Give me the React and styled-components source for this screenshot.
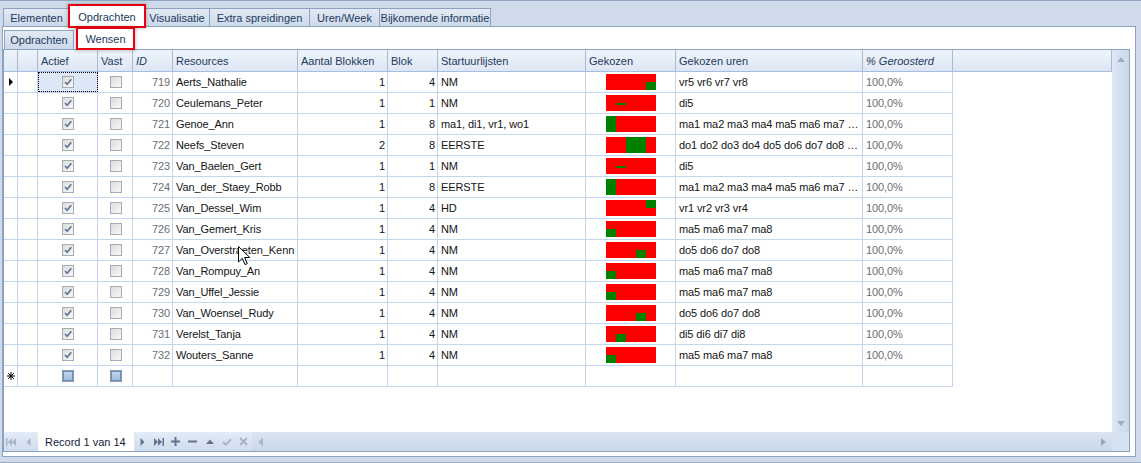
import React from "react";
import styled, { createGlobalStyle, css } from "styled-components";

const GlobalStyle = createGlobalStyle`
  html, body { margin: 0; padding: 0; }
  body {
    background: #cfdbeb;
    font-family: "Liberation Sans", Arial, sans-serif;
    font-size: 11px;
  }
  * { box-sizing: border-box; }
`;

const Window = styled.div`
  position: relative;
  width: 1141px;
  height: 463px;
  background: #cfdbeb;
  border-top: 1px solid #8ea4c1;
  border-bottom: 1px solid #9aafca;
  padding: 5px 5px 5px 2px;
  display: flex;
  flex-direction: column;
`;

const TabStrip = styled.div`
  display: flex;
  align-items: flex-end;
  height: 20px;
  padding-left: 2px;
  position: relative;
  z-index: 2;
`;

const Tab = styled.div`
  width: ${(p) => p.$w}px;
  flex: none;
  height: ${(p) => (p.$active ? 22 : 18)}px;
  margin-left: -1px;
  margin-bottom: ${(p) => (p.$active ? -1 : 0)}px;
  border: 1px solid #8ca2c0;
  border-bottom: none;
  background: ${(p) => (p.$active ? "#fff" : "linear-gradient(#e2eaf5, #ccd9eb)")};
  color: #1e395b;
  display: flex;
  align-items: center;
  justify-content: center;
  white-space: nowrap;
  position: relative;
  z-index: ${(p) => (p.$active ? 2 : 1)};
  ${(p) =>
    p.$marked &&
    css`
      outline: 2px solid #e60012;
      outline-offset: -1px;
      box-shadow: 0 0 3px 2px rgba(60, 60, 60, 0.25);
    `}
`;

const Panel = styled.div`
  flex: 1;
  background: #fff;
  border: 1px solid #8ca2c0;
  display: flex;
  flex-direction: column;
  padding: 0 5px 4px 0;
`;

const SubTabStrip = styled.div`
  display: flex;
  align-items: flex-end;
  height: 22px;
  padding-left: 1px;
  position: relative;
  z-index: 2;
`;

const SubTab = styled.div`
  width: ${(p) => p.$w}px;
  flex: none;
  height: ${(p) => (p.$active ? 21 : 19)}px;
  margin-left: ${(p) => p.$gap || 0}px;
  border: 1px solid #8ca2c0;
  border-bottom: none;
  background: ${(p) => (p.$active ? "#fff" : "linear-gradient(#e2eaf5, #ccd9eb)")};
  color: #1e395b;
  display: flex;
  align-items: center;
  justify-content: center;
  ${(p) =>
    p.$marked &&
    css`
      border-color: transparent;
      outline: 2px solid #e60012;
      outline-offset: -1px;
      box-shadow: 0 0 3px 2px rgba(60, 60, 60, 0.25);
    `}
`;

const Grid = styled.div`
  flex: 1;
  border: 1px solid #8ca2c0;
  display: flex;
  flex-direction: column;
  min-height: 0;
`;

const GridBody = styled.div`
  flex: 1;
  display: flex;
  min-height: 0;
`;

const TableArea = styled.div`
  flex: 1;
  display: flex;
  flex-direction: column;
  overflow: hidden;
  background: #fff;
`;

const HeaderRow = styled.div`
  display: flex;
  height: 22px;
  flex: none;
  border-bottom: 1px solid #a5bedf;
  background: linear-gradient(#eef4fb, #dde7f4);
`;

const HeaderCell = styled.div`
  width: ${(p) => p.$w}px;
  flex: ${(p) => (p.$fill ? 1 : "none")};
  border-right: 1px solid #a6bbd6;
  padding-left: 3px;
  display: flex;
  align-items: center;
  color: #1e395b;
  font-style: ${(p) => (p.$italic ? "italic" : "normal")};
  white-space: nowrap;
  overflow: hidden;
`;

const Row = styled.div`
  display: flex;
  flex: none;
  width: 949px;
  height: 21px;
  border-bottom: 1px solid #c3d6ef;
`;

const Cell = styled.div`
  width: ${(p) => p.$w}px;
  flex: none;
  border-right: 1px solid #c3d6ef;
  display: flex;
  align-items: center;
  justify-content: ${(p) =>
    p.$align === "right" ? "flex-end" : p.$align === "center" ? "center" : "flex-start"};
  padding: 0 2px 0 3px;
  color: ${(p) => (p.$muted ? "#6e6e6e" : "#141414")};
  letter-spacing: -0.1px;
  white-space: nowrap;
  overflow: hidden;
  ${(p) =>
    p.$focus &&
    css`
      background: #dce8f8;
      outline: 1px dotted #000;
      outline-offset: -1px;
    `}
`;

const RowPointer = styled.span`
  width: 0;
  height: 0;
  border-left: 4px solid #000;
  border-top: 4px solid transparent;
  border-bottom: 4px solid transparent;
`;

const CheckBox = styled.span`
  width: 12px;
  height: 12px;
  border: 1px solid #a8abb2;
  background: linear-gradient(135deg, #dcdcdc, #f8f8f8);
  display: flex;
  align-items: center;
  justify-content: center;
  ${(p) =>
    p.$new &&
    css`
      border-color: #8f9bae;
      background: #fff;
      &::after {
        content: "";
        width: 8px;
        height: 8px;
        background: linear-gradient(#c2d5ec, #9ebce0);
        border: 1px solid #6f8fbb;
      }
    `}
`;

const Footer = styled.div`
  display: flex;
  height: 19px;
  flex: none;
`;

const Navigator = styled.div`
  display: flex;
  width: 248px;
  flex: none;
  background: linear-gradient(#e3ebf6, #cfdcee);
`;

const NavButton = styled.div`
  width: ${(p) => p.$w}px;
  flex: none;
  display: flex;
  align-items: center;
  justify-content: center;
`;

const RecordBox = styled.div`
  width: 96px;
  flex: none;
  background: #fff;
  color: #15233a;
  font-size: 11px;
  display: flex;
  align-items: center;
  padding-left: 7px;
  white-space: nowrap;
`;

const HScroll = styled.div`
  flex: 1;
  display: flex;
  align-items: center;
  justify-content: space-between;
  padding: 0 6px;
  background: linear-gradient(#dae4f2, #c9d8eb);
`;

const VScroll = styled.div`
  width: 17px;
  flex: none;
  display: flex;
  flex-direction: column;
  align-items: center;
  justify-content: space-between;
  padding: 7px 0 6px 1px;
  background: linear-gradient(90deg, #dfe8f4, #c9d8eb);
`;

const Corner = styled.div`
  width: 17px;
  flex: none;
  background: #d6e1f0;
`;

const Arrow = styled.span`
  width: 0;
  height: 0;
  ${(p) =>
    p.$dir === "up" &&
    css`
      border-bottom: 5px solid #9eadc3;
      border-left: 4.5px solid transparent;
      border-right: 4.5px solid transparent;
    `}
  ${(p) =>
    p.$dir === "down" &&
    css`
      border-top: 5px solid #9eadc3;
      border-left: 4.5px solid transparent;
      border-right: 4.5px solid transparent;
    `}
  ${(p) =>
    p.$dir === "left" &&
    css`
      border-right: 5px solid #a9b6c9;
      border-top: 4px solid transparent;
      border-bottom: 4px solid transparent;
    `}
  ${(p) =>
    p.$dir === "right" &&
    css`
      border-left: 5px solid #97a6bd;
      border-top: 4px solid transparent;
      border-bottom: 4px solid transparent;
    `}
`;

const Cursor = styled.svg`
  position: absolute;
  left: 238px;
  top: 245px;
  pointer-events: none;
  z-index: 5;
`;

const columns = [
  { key: "ind", w: 14, label: "" },
  { key: "blank", w: 20, label: "" },
  { key: "actief", w: 60, label: "Actief" },
  { key: "vast", w: 35, label: "Vast" },
  { key: "id", w: 40, label: "ID", italic: true },
  { key: "res", w: 125, label: "Resources" },
  { key: "aantal", w: 90, label: "Aantal Blokken" },
  { key: "blok", w: 50, label: "Blok" },
  { key: "start", w: 148, label: "Startuurlijsten" },
  { key: "gek", w: 90, label: "Gekozen" },
  { key: "uren", w: 187, label: "Gekozen uren" },
  { key: "pct", w: 90, label: "% Geroosterd", italic: true },
];

const W = Object.fromEntries(columns.map((c) => [c.key, c.w]));

// id, naam, aantal, blok, startlijst, groen vak [x, y, w, h], gekozen uren
const rows = [
  [719, "Aerts_Nathalie", 1, 4, "NM", [40, 8, 10, 8], "vr5 vr6 vr7 vr8"],
  [720, "Ceulemans_Peter", 1, 1, "NM", [10, 8, 10, 2], "di5"],
  [721, "Genoe_Ann", 1, 8, "ma1, di1, vr1, wo1", [0, 0, 10, 16], "ma1 ma2 ma3 ma4 ma5 ma6 ma7 …"],
  [722, "Neefs_Steven", 2, 8, "EERSTE", [20, 0, 20, 16], "do1 do2 do3 do4 do5 do6 do7 do8 …"],
  [723, "Van_Baelen_Gert", 1, 1, "NM", [10, 8, 10, 2], "di5"],
  [724, "Van_der_Staey_Robb", 1, 8, "EERSTE", [0, 0, 10, 16], "ma1 ma2 ma3 ma4 ma5 ma6 ma7 …"],
  [725, "Van_Dessel_Wim", 1, 4, "HD", [40, 0, 10, 8], "vr1 vr2 vr3 vr4"],
  [726, "Van_Gemert_Kris", 1, 4, "NM", [0, 8, 10, 8], "ma5 ma6 ma7 ma8"],
  [727, "Van_Overstraeten_Kenn", 1, 4, "NM", [30, 8, 10, 8], "do5 do6 do7 do8"],
  [728, "Van_Rompuy_An", 1, 4, "NM", [0, 8, 10, 8], "ma5 ma6 ma7 ma8"],
  [729, "Van_Uffel_Jessie", 1, 4, "NM", [0, 8, 10, 8], "ma5 ma6 ma7 ma8"],
  [730, "Van_Woensel_Rudy", 1, 4, "NM", [30, 8, 10, 8], "do5 do6 do7 do8"],
  [731, "Verelst_Tanja", 1, 4, "NM", [10, 8, 10, 8], "di5 di6 di7 di8"],
  [732, "Wouters_Sanne", 1, 4, "NM", [0, 8, 10, 8], "ma5 ma6 ma7 ma8"],
];

const Check = ({ on, isNew }) => (
  <CheckBox $new={isNew}>
    {on && (
      <svg width="10" height="10" viewBox="0 0 10 10">
        <path d="M2 5 L4.2 7.3 L8.3 2.2" fill="none" stroke="#5f7596" strokeWidth="1.7" />
      </svg>
    )}
  </CheckBox>
);

const Bar = ({ green }) => {
  const [x, y, w, h] = green;
  return (
    <svg width="50" height="16">
      <rect width="50" height="16" fill="#ff0000" />
      <rect x={x} y={y} width={w} height={h} fill="#008000" />
    </svg>
  );
};

const NewRowMark = () => (
  <svg width="8" height="8" viewBox="0 0 8 8">
    <g stroke="#000" strokeWidth="1">
      <line x1="4" y1="0" x2="4" y2="8" />
      <line x1="0" y1="4" x2="8" y2="4" />
      <line x1="1.2" y1="1.2" x2="6.8" y2="6.8" />
      <line x1="6.8" y1="1.2" x2="1.2" y2="6.8" />
    </g>
  </svg>
);

const dark = "#62748f";
const light = "#a9b5c8";

const NavIcon = ({ kind }) => {
  switch (kind) {
    case "first":
      return (
        <svg width="10" height="8" viewBox="0 0 10 8" fill={light}>
          <rect x="0" y="0" width="1.5" height="8" />
          <path d="M6 0 L2 4 L6 8Z M10 0 L6 4 L10 8Z" />
        </svg>
      );
    case "prev":
      return (
        <svg width="5" height="8" viewBox="0 0 5 8" fill={light}>
          <path d="M4.5 0 L0.5 4 L4.5 8Z" />
        </svg>
      );
    case "next":
      return (
        <svg width="5" height="8" viewBox="0 0 5 8" fill={dark}>
          <path d="M0.5 0 L4.5 4 L0.5 8Z" />
        </svg>
      );
    case "last":
      return (
        <svg width="10" height="8" viewBox="0 0 10 8" fill={dark}>
          <path d="M0 0 L4 4 L0 8Z M4 0 L8 4 L4 8Z" />
          <rect x="8.5" y="0" width="1.5" height="8" />
        </svg>
      );
    case "plus":
      return (
        <svg width="9" height="9" viewBox="0 0 9 9" fill={dark}>
          <rect x="3.5" y="0" width="2" height="9" />
          <rect x="0" y="3.5" width="9" height="2" />
        </svg>
      );
    case "minus":
      return (
        <svg width="9" height="9" viewBox="0 0 9 9" fill={dark}>
          <rect x="0" y="3.5" width="9" height="2" />
        </svg>
      );
    case "up":
      return (
        <svg width="8" height="5" viewBox="0 0 8 5" fill={dark}>
          <path d="M0 5 L4 0.5 L8 5Z" />
        </svg>
      );
    case "ok":
      return (
        <svg width="10" height="8" viewBox="0 0 10 8">
          <path d="M1 4 L3.8 6.6 L9 1.2" fill="none" stroke={light} strokeWidth="2" />
        </svg>
      );
    default:
      return (
        <svg width="9" height="9" viewBox="0 0 9 9">
          <path d="M1 1 L8 8 M8 1 L1 8" stroke={light} strokeWidth="2" />
        </svg>
      );
  }
};

const App = () => (
  <>
    <GlobalStyle />
    <Window>
      <TabStrip>
        <Tab $w={67}>Elementen</Tab>
        <Tab $w={76} $active $marked>
          Opdrachten
        </Tab>
        <Tab $w={66}>Visualisatie</Tab>
        <Tab $w={101}>Extra spreidingen</Tab>
        <Tab $w={71}>Uren/Week</Tab>
        <Tab $w={112}>Bijkomende informatie</Tab>
      </TabStrip>

      <Panel>
        <SubTabStrip>
          <SubTab $w={70}>Opdrachten</SubTab>
          <SubTab $w={57} $gap={3} $active $marked>
            Wensen
          </SubTab>
        </SubTabStrip>

        <Grid>
          <GridBody>
            <TableArea>
              <HeaderRow>
                {columns.map((c) => (
                  <HeaderCell key={c.key} $w={c.w} $italic={c.italic}>
                    {c.label}
                  </HeaderCell>
                ))}
                <HeaderCell $fill />
              </HeaderRow>

              {rows.map(([id, name, aantal, blok, start, green, uren], i) => (
                <Row key={id}>
                  <Cell $w={W.ind} $align="center">
                    {i === 0 && <RowPointer />}
                  </Cell>
                  <Cell $w={W.blank} />
                  <Cell $w={W.actief} $align="center" $focus={i === 0}>
                    <Check on />
                  </Cell>
                  <Cell $w={W.vast} $align="center">
                    <Check />
                  </Cell>
                  <Cell $w={W.id} $align="right" $muted>
                    {id}
                  </Cell>
                  <Cell $w={W.res}>{name}</Cell>
                  <Cell $w={W.aantal} $align="right">
                    {aantal}
                  </Cell>
                  <Cell $w={W.blok} $align="right">
                    {blok}
                  </Cell>
                  <Cell $w={W.start}>{start}</Cell>
                  <Cell $w={W.gek} $align="center">
                    <Bar green={green} />
                  </Cell>
                  <Cell $w={W.uren}>{uren}</Cell>
                  <Cell $w={W.pct} $muted>
                    100,0%
                  </Cell>
                </Row>
              ))}

              <Row>
                <Cell $w={W.ind} $align="center">
                  <NewRowMark />
                </Cell>
                <Cell $w={W.blank} />
                <Cell $w={W.actief} $align="center">
                  <Check isNew />
                </Cell>
                <Cell $w={W.vast} $align="center">
                  <Check isNew />
                </Cell>
                <Cell $w={W.id} />
                <Cell $w={W.res} />
                <Cell $w={W.aantal} />
                <Cell $w={W.blok} />
                <Cell $w={W.start} />
                <Cell $w={W.gek} />
                <Cell $w={W.uren} />
                <Cell $w={W.pct} />
              </Row>
            </TableArea>

            <VScroll>
              <Arrow $dir="up" />
              <Arrow $dir="down" />
            </VScroll>
          </GridBody>

          <Footer>
            <Navigator>
              <NavButton $w={14}>
                <NavIcon kind="first" />
              </NavButton>
              <NavButton $w={20}>
                <NavIcon kind="prev" />
              </NavButton>
              <RecordBox>Record 1 van 14</RecordBox>
              <NavButton $w={16}>
                <NavIcon kind="next" />
              </NavButton>
              <NavButton $w={17}>
                <NavIcon kind="last" />
              </NavButton>
              <NavButton $w={17}>
                <NavIcon kind="plus" />
              </NavButton>
              <NavButton $w={17}>
                <NavIcon kind="minus" />
              </NavButton>
              <NavButton $w={17}>
                <NavIcon kind="up" />
              </NavButton>
              <NavButton $w={17}>
                <NavIcon kind="ok" />
              </NavButton>
              <NavButton $w={17}>
                <NavIcon kind="cancel" />
              </NavButton>
            </Navigator>
            <HScroll>
              <Arrow $dir="left" />
              <Arrow $dir="right" />
            </HScroll>
            <Corner />
          </Footer>
        </Grid>
      </Panel>

      <Cursor width="13" height="20" viewBox="0 0 13 20">
        <path
          d="M0.5 0.5 L0.5 16 L4.3 12.3 L7 18.6 L9.3 17.6 L6.7 11.5 L11.8 11.5 Z"
          fill="#fff"
          stroke="#000"
          strokeWidth="1"
          strokeLinejoin="round"
        />
      </Cursor>
    </Window>
  </>
);

export default App;
